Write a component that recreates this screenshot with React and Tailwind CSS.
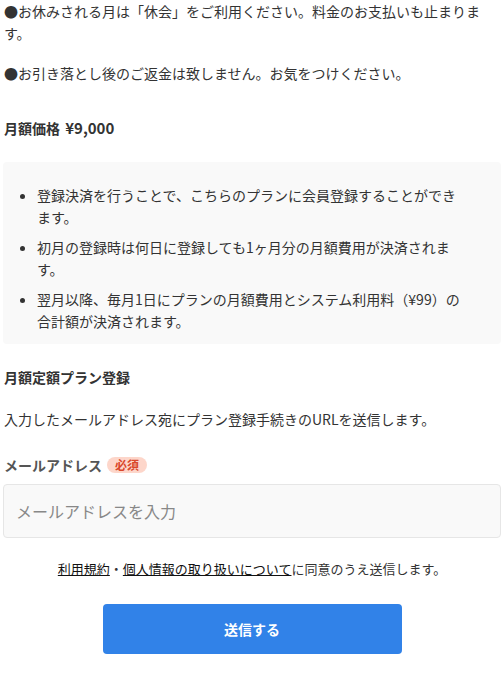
import React from 'react';

const jp = 'font-["Noto_Sans_CJK_JP","Noto_Sans",sans-serif]';

export default function App() {
    return (
        <div className={`${jp} bg-white text-[#333] text-[14px] leading-[22px] px-[4px] w-[504px]`}>
            {/* 注意事項 */}
            <p>●お休みされる月は「休会」をご利用ください。料金のお支払いも止まります。</p>
            <p className="mt-[18px]">●お引き落とし後のご返金は致しません。お気をつけください。</p>

            <p className="mt-[33px] font-bold">
                月額価格 <span className="ml-[2px] text-[15px]">¥9,000</span>
            </p>

            <div className="mt-[23px] -mx-[1px] bg-[#f9f9f9] rounded-[4px] pt-[22px] pb-[12px] pl-[34px] pr-[36px]">
                <ul className="list-disc flex flex-col gap-[8px] marker:text-[#333]">
                    <li>登録決済を行うことで、こちらのプランに会員登録することができます。</li>
                    <li>初月の登録時は何日に登録しても1ヶ月分の月額費用が決済されます。</li>
                    <li>翌月以降、毎月1日にプランの月額費用とシステム利用料（¥99）の合計額が決済されます。</li>
                </ul>
            </div>

            <h2 className="mt-[22px] font-bold">月額定額プラン登録</h2>
            <p className="mt-[20px]">入力したメールアドレス宛にプラン登録手続きのURLを送信します。</p>

            <div className="mt-[24px] flex items-center gap-[5px]">
                <span className="font-bold text-[#555]">メールアドレス</span>
                <span className="bg-[#fdd6ca] text-[#d9472b] text-[12px] leading-[16px] font-bold rounded-full px-[8px]">必須</span>
            </div>
            <input
                type="email"
                placeholder="メールアドレスを入力"
                className="mt-[8px] -mx-[1px] block w-[498px] h-[54px] bg-[#f9f9f9] border border-[#e6e6e6] rounded-[4px] px-[12px] text-[16px] placeholder:text-[#888] outline-none"
            />

            <p className="mt-[20px] text-center text-[13px]">
                <a href="#" className="underline text-[#111]">利用規約</a>・
                <a href="#" className="underline text-[#111]">個人情報の取り扱いについて</a>に同意のうえ送信します。
            </p>

            <div className="mt-[24px] pb-[18px] flex justify-center">
                <button className="w-[299px] h-[50px] bg-[#3182e8] text-white font-bold rounded-[4px]">
                    送信する
                </button>
            </div>
        </div>
    );
}
